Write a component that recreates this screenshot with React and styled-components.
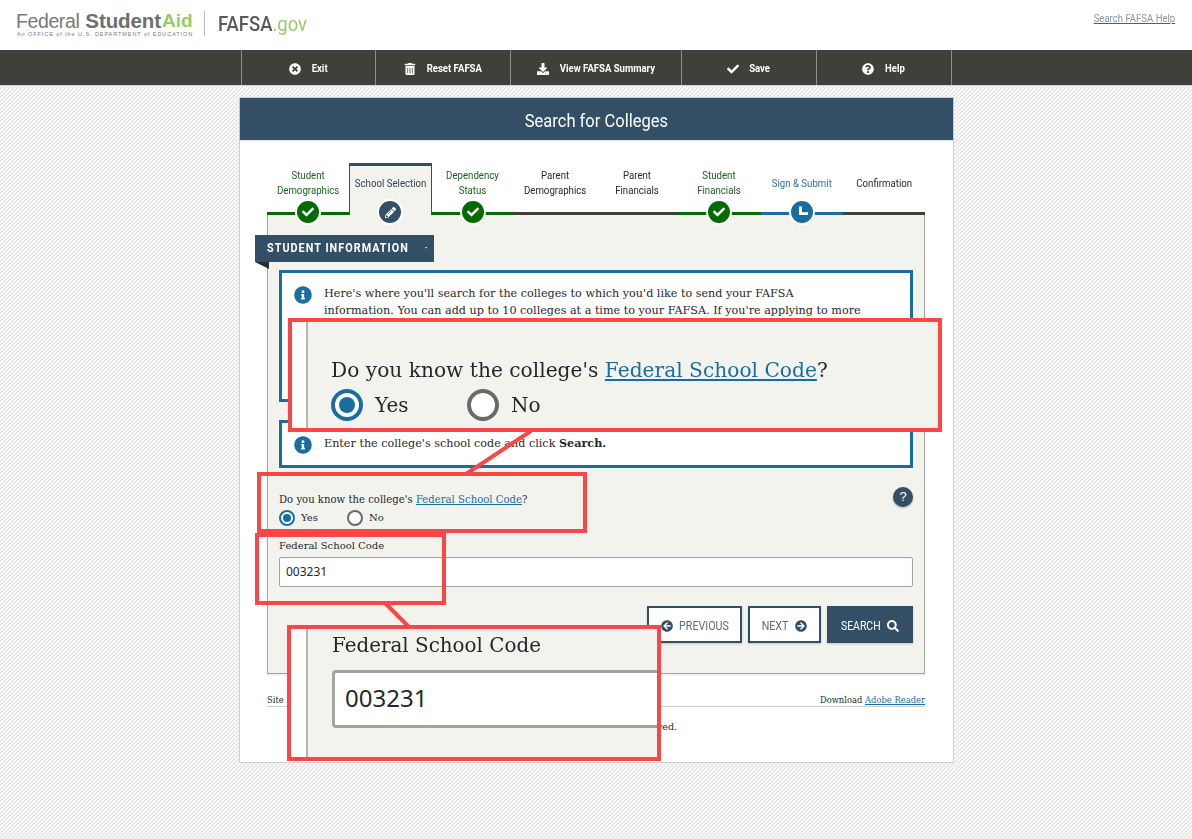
import React from "react";
import styled, { createGlobalStyle } from "styled-components";
import {
  FaTimesCircle, FaTrashAlt, FaDownload, FaCheck, FaQuestionCircle,
  FaPencilAlt, FaInfoCircle, FaArrowCircleLeft, FaArrowCircleRight, FaSearch,
} from "react-icons/fa";

const NARROW = `"Roboto", sans-serif`;
const SERIF = `"DejaVu Serif", "Liberation Serif", serif`;
const NAVY = "#334f66";
const BLUE = "#1a6e9f";
const GREEN = "#046b04";
const PANEL = "#f3f3ee";
const RED = "#fb4646";

const Global = createGlobalStyle`
  html, body { margin: 0; padding: 0; }
  body {
    width: 1192px; height: 839px; overflow: hidden;
    background-color: #fbfbfb;
    background-image: linear-gradient(135deg, #e6e6e6 25%, #fbfbfb 25%, #fbfbfb 50%, #e6e6e6 50%, #e6e6e6 75%, #fbfbfb 75%);
    background-size: 4px 4px;
  }
`;

const Page = styled.div`position: relative; width: 1192px; height: 839px;`;

/* Condensed text: no condensed family is installed, so the glyphs are squeezed and the box trimmed to match. */
const Narrow = styled.span`
  display: inline-block; white-space: nowrap; transform: scaleX(${p => p.$sx || 0.84});
  margin: 0 ${p => -(p.$trim || 0)}px;
`;

const Header = styled.header`
  height: 50px; background: #fff; display: flex; align-items: flex-start;
  justify-content: space-between; padding: 0 17px 0 16px; box-sizing: border-box;
`;
const Logo = styled.div`display: flex; align-items: flex-start; padding-top: 11px;`;
const LogoMark = styled.div`width: 176px; margin-right: 12px;`;
const LogoName = styled.div`
  font: 19.5px/20px "Liberation Sans", sans-serif; color: #77787b; white-space: nowrap;
  display: flex; gap: 6px;
`;
const LogoLight = styled.span`letter-spacing: -0.4px;`;
const Strong = styled.b`color: #6d6e71; font-size: 20.5px; letter-spacing: -0.1px;`;
const GreenStrong = styled.b`color: #98cb66; margin-left: -5px; font-size: 19px;`;
const Tagline = styled.div`
  font: 5.5px/7px "Liberation Sans", sans-serif; color: #77787b; letter-spacing: 0.93px; white-space: nowrap; margin: 0 0 0 1px;
`;
const LogoDivider = styled.div`width: 1px; height: 25px; background: #b9b9b9; margin-right: 13px;`;
const Fafsa = styled.div`
  font: 500 21px/27px "Roboto", "Liberation Sans", sans-serif; color: #58595b;
  transform: scaleX(0.88); transform-origin: left center; white-space: nowrap;
`;
const Gov = styled.span`color: #98cb66; font-weight: 400;`;
const HelpLink = styled.a`
  font: 11.5px/14px ${NARROW}; color: #8795a3; margin-top: 11px; text-decoration: underline; text-decoration-color: ${BLUE};
  transform: scaleX(0.83); transform-origin: right center; white-space: nowrap;
`;

const Toolbar = styled.nav`
  height: 35px; background: #403f3a; border-bottom: 1px solid #d5d5d5;
  display: flex; padding-left: 241px;
`;
const ToolItem = styled.a`
  width: ${p => p.$w}px; box-sizing: border-box; border-left: 1px solid #8f8e89; padding-top: 2px;
  display: flex; align-items: center; justify-content: center; gap: 10px; color: #fff;
  font: 700 11.5px/33px ${NARROW};
  &:last-child { border-right: 1px solid #8f8e89; }
  svg { font-size: 12px; }
`;

const Card = styled.main`
  width: 713px; height: 664px; margin: 11px 0 0 239px; background: #fff; border: 1px solid #cfcfcf;
  display: flex; flex-direction: column;
`;
const Title = styled.h1`
  margin: 0; height: 42px; background: ${NAVY}; color: #fff; text-align: center;
  font: 400 19px/45px ${NARROW}; box-shadow: 0 1px 2px rgba(0,0,0,.15);
`;
const Stepper = styled.ol`
  list-style: none; margin: 0 28px 0 27px; padding: 0; display: grid; grid-template-columns: repeat(8, minmax(0, 1fr)); height: 75px;
`;
const Step = styled.li`
  position: relative; padding-top: 23px; box-sizing: border-box; text-align: center;
  font: 11.5px/15px ${NARROW};
  color: ${p => ({ done: "#1b5e1b", current: "#2f6f9c", todo: "#24272a" }[p.$state])};
  border-bottom: 3px solid ${p => ({ done: GREEN, current: BLUE, todo: "#403f3a" }[p.$state])};
`;
const ActiveStep = styled.li`
  position: relative; margin-top: 23px; height: 52px; box-sizing: border-box; text-align: center;
  font: 11.5px/15px ${NARROW}; color: #2f4356; background: ${PANEL};
  border-top: 3px solid ${NAVY}; border-left: 1px solid ${NAVY}; border-right: 1px solid ${NAVY};
`;
const StepLabel = styled.div`
  height: ${p => p.$h}px; display: flex; align-items: center; justify-content: center;
`;
const StepNode = styled.span`
  position: absolute; left: 50%; bottom: ${p => p.$bottom}px; transform: translateX(-50%);
  width: 22px; height: 22px; border: 2px solid #fff; border-radius: 50%;
  background: ${p => p.$bg}; color: #fff; display: flex; align-items: center; justify-content: center;
  font-size: ${p => p.$icon || 12}px; z-index: 2;
`;

const Panel = styled.section`
  flex: none; margin: 0 28px 0 27px; height: 459px; background: ${PANEL}; box-sizing: border-box;
  border: 1px solid #a3a3a0; border-top: none; padding: 20px 11px 0; box-shadow: 0 1px 2px rgba(0,0,0,.1);
`;
const Ribbon = styled.div`
  position: relative; width: 179px; height: 27px; margin-left: -24px; background: ${NAVY}; color: #fff;
  font: 700 12px/27px "Roboto", sans-serif; padding: 0 12px; box-sizing: border-box;
  white-space: nowrap; display: flex; justify-content: space-between;
  &::after {
    content: ""; position: absolute; left: 0; top: 27px;
    border-top: 7px solid #1f2f3d; border-left: 14px solid transparent;
  }
`;
const RibbonText = styled.span`letter-spacing: 1.15px; transform: scaleX(0.9); transform-origin: left center;`;
const RibbonDot = styled.span`font-size: 9px; margin-right: 1px;`;
const InfoBox = styled.div`
  display: flex; gap: 12px; background: #fff; border: 3px solid ${BLUE}; box-sizing: border-box;
  min-height: ${p => p.$h}px; margin-top: ${p => p.$mt}px; padding: ${p => p.$pt}px 20px 0 12px;
  font: 11.2px/17px ${SERIF}; color: #25282b;
  svg { color: ${BLUE}; font-size: 18px; flex: none; margin-top: 1px; }
`;
const Question = styled.div`
  position: relative; margin-top: 24px; font: 10.1px/15px ${SERIF}; color: #25282b;
`;
const FieldLink = styled.a`color: ${BLUE}; text-decoration: underline;`;
const HelpBubble = styled.span`
  position: absolute; right: 0; top: -5px; width: 20px; height: 20px; border-radius: 50%;
  background: ${NAVY}; color: #fff; font: 13px/20px "Liberation Sans", sans-serif; text-align: center;
  box-shadow: 0 1px 2px rgba(0,0,0,.3);
`;
const Radios = styled.div`display: flex; margin-top: 3px; height: 16px; align-items: center; font: 10px/16px ${SERIF}; color: #25282b;`;
const RadioOption = styled.label`display: flex; align-items: center; gap: 6px; width: 68px;`;
const Radio = styled.span`
  width: 16px; height: 16px; box-sizing: border-box; border-radius: 50%; background: #fff;
  border: 2px solid ${p => p.$on ? BLUE : "#6a6a6a"}; display: flex; align-items: center; justify-content: center;
  &::after { content: ""; width: 8px; height: 8px; border-radius: 50%; background: ${p => p.$on ? BLUE : "transparent"}; }
`;
const FieldLabel = styled.div`margin-top: 13px; font: 10px/14px ${SERIF}; color: #25282b;`;
const Input = styled.input`
  display: block; width: 100%; height: 30px; margin-top: 4px; box-sizing: border-box; background: #fff;
  border: 1px solid #a3a3a0; border-radius: 2px; padding: 0 6px 2px; font: 12px "Noto Sans", sans-serif; color: #25282b;
  box-shadow: inset 0 1px 2px rgba(0,0,0,.06);
`;
const Actions = styled.div`display: flex; justify-content: flex-end; gap: 6px; margin-top: 19px;`;
const Btn = styled.button`
  height: 37px; width: ${p => p.$w}px; box-sizing: border-box; padding: 2px 0 0;
  display: flex; align-items: center; justify-content: center; gap: 6px;
  border: 2px solid ${NAVY}; background: ${p => p.$solid ? NAVY : "#fff"}; color: ${p => p.$solid ? "#fff" : "#5a6b7a"};
  font: 12px ${NARROW}; box-shadow: 0 1px 2px rgba(0,0,0,.2);
  svg { font-size: 12px; color: ${p => p.$solid ? "#fff" : NAVY}; }
`;
const Footer = styled.footer`margin: 0 28px 0 27px; font: 8.4px/12px ${SERIF}; color: #25282b;`;
const FooterTop = styled.div`
  display: flex; justify-content: space-between; margin-top: 20px; height: 12px; border-bottom: 1px solid #cfcfcf;
`;
const FooterNote = styled.div`margin-top: 14px; padding-right: 248px; text-align: right; white-space: nowrap; font-size: 9.5px;`;

const Outline = styled.div`
  position: absolute; box-sizing: border-box; border: 4px solid ${RED};
  left: ${p => p.$x}px; top: ${p => p.$y}px; width: ${p => p.$w}px; height: ${p => p.$h}px;
  z-index: 5;
`;
const Magnified = styled(Outline)`
  background: ${PANEL}; z-index: 6;
  &::before { content: ""; position: absolute; left: 0; top: 0; bottom: 0; width: ${p => p.$strip}px; background: #fff; border-right: 2px solid #b4b4b0; }
`;
const BigQuestion = styled.div`
  position: absolute; left: 39px; top: 33px; white-space: nowrap; font: 20.2px/30px ${SERIF}; color: #25282b; filter: blur(0.35px);
`;
const BigRadios = styled.div`
  position: absolute; left: 39px; top: 67px; display: flex; align-items: center; font: 20px/32px ${SERIF}; color: #25282b; filter: blur(0.35px);
`;
const BigOption = styled.label`display: flex; align-items: center; gap: 12px; width: 136px;`;
const BigRadio = styled.span`
  width: 32px; height: 32px; box-sizing: border-box; border-radius: 50%; background: #fff;
  border: 4px solid ${p => p.$on ? BLUE : "#6a6a6a"}; display: flex; align-items: center; justify-content: center;
  &::after { content: ""; width: 16px; height: 16px; border-radius: 50%; background: ${p => p.$on ? BLUE : "transparent"}; }
`;
const BigLabel = styled.div`
  position: absolute; left: 41px; top: 3px; font: 19.9px/28px ${SERIF}; color: #25282b; white-space: nowrap; filter: blur(0.35px);
`;
const BigInput = styled.div`
  position: absolute; left: 41px; right: 0; top: 41px; height: 58px; box-sizing: border-box; background: #fff;
  border: 3px solid #a3a3a0; border-right: none; border-radius: 4px 0 0 4px; padding-left: 10px;
  font: 24px/50px "Noto Sans", sans-serif; color: #25282b;
`;
const Connector = styled.svg`position: absolute; left: 0; top: 0; z-index: 4; pointer-events: none;`;

const ClockHands = () => (
  <svg width="14" height="14" viewBox="0 0 14 14" aria-hidden="true">
    <path d="M4 1.5H7V7.2H13V10H4Z" fill="#fff" />
  </svg>
);

const STEPS = [
  { label: ["Student", "Demographics"], state: "done" },
  { label: ["School Selection"], state: "active" },
  { label: ["Dependency", "Status"], state: "done" },
  { label: ["Parent", "Demographics"], state: "todo" },
  { label: ["Parent", "Financials"], state: "todo" },
  { label: ["Student", "Financials"], state: "done" },
  { label: ["Sign & Submit"], state: "current" },
  { label: ["Confirmation"], state: "todo" },
];
const TOOLS = [
  [134, FaTimesCircle, "Exit", 1],
  [135, FaTrashAlt, "Reset FAFSA", 5],
  [171, FaDownload, "View FAFSA Summary", 9],
  [135, FaCheck, "Save", 2],
  [136, FaQuestionCircle, "Help", 1],
];

const StepText = ({ lines }) => (
  <Narrow>{lines.map(l => <div key={l}>{l}</div>)}</Narrow>
);

export default function App() {
  return (
    <Page>
      <Global />
      <Header>
        <Logo>
          <LogoMark>
            <LogoName><LogoLight>Federal</LogoLight><Strong>Student</Strong><GreenStrong>Aid</GreenStrong></LogoName>
            <Tagline>An OFFICE of the U.S. DEPARTMENT of EDUCATION</Tagline>
          </LogoMark>
          <LogoDivider />
          <Fafsa>FAFSA<Gov>.gov</Gov></Fafsa>
        </Logo>
        <HelpLink>Search FAFSA Help</HelpLink>
      </Header>
      <Toolbar>
        {TOOLS.map(([w, Icon, text, trim]) => (
          <ToolItem key={text} $w={w}><Icon /><Narrow $sx={0.83} $trim={trim}>{text}</Narrow></ToolItem>
        ))}
      </Toolbar>
      <Card>
        <Title><Narrow $sx={0.87}>Search for Colleges</Narrow></Title>
        <Stepper>
          {STEPS.map(s => s.state === "active" ? (
            <ActiveStep key={s.label[0]}>
              <StepLabel $h={34}><StepText lines={s.label} /></StepLabel>
              <StepNode $bg={NAVY} $bottom={-10} $icon={11}><FaPencilAlt /></StepNode>
            </ActiveStep>
          ) : (
            <Step key={s.label.join()} $state={s.state}>
              <StepLabel $h={40}><StepText lines={s.label} /></StepLabel>
              {s.state === "done" && <StepNode $bg={GREEN} $bottom={-13}><FaCheck /></StepNode>}
              {s.state === "current" && <StepNode $bg={BLUE} $bottom={-13}><ClockHands /></StepNode>}
            </Step>
          ))}
        </Stepper>
        <Panel>
          <Ribbon><RibbonText>STUDENT INFORMATION</RibbonText><RibbonDot>·</RibbonDot></Ribbon>
          <InfoBox $h={132} $mt={8} $pt={12}>
            <FaInfoCircle />
            <div>
              Here's where you'll search for the colleges to which you'd like to send your FAFSA<br />
              information. You can add up to 10 colleges at a time to your FAFSA. If you're applying to more<br />
              than 10 colleges, you can add more later.
            </div>
          </InfoBox>
          <InfoBox $h={48} $mt={18} $pt={12}>
            <FaInfoCircle />
            <div>Enter the college's school code and click <b>Search.</b></div>
          </InfoBox>
          <Question>
            Do you know the college's <FieldLink>Federal School Code</FieldLink>?
            <HelpBubble>?</HelpBubble>
          </Question>
          <Radios>
            <RadioOption><Radio $on />Yes</RadioOption>
            <RadioOption><Radio />No</RadioOption>
          </Radios>
          <FieldLabel>Federal School Code</FieldLabel>
          <Input defaultValue="003231" />
          <Actions>
            <Btn $w={95}><FaArrowCircleLeft /><Narrow $sx={0.89} $trim={3}>PREVIOUS</Narrow></Btn>
            <Btn $w={73}><Narrow $sx={0.89} $trim={2}>NEXT</Narrow><FaArrowCircleRight /></Btn>
            <Btn $w={86} $solid><Narrow $sx={0.87} $trim={3}>SEARCH</Narrow><FaSearch /></Btn>
          </Actions>
        </Panel>
        <Footer>
          <FooterTop>
            <span>Site Links</span>
            <span>Download <FieldLink>Adobe Reader</FieldLink></span>
          </FooterTop>
          <FooterNote>All rights reserved.</FooterNote>
        </Footer>
      </Card>

      <Connector width="1192" height="839">
        <line x1="531" y1="431" x2="466" y2="474" stroke={RED} strokeWidth="4" />
        <line x1="385" y1="603" x2="409" y2="627" stroke={RED} strokeWidth="4" />
      </Connector>
      <Outline $x={257} $y={472} $w={330} $h={61} />
      <Outline $x={255} $y={533} $w={191} $h={72} />
      <Magnified $x={288} $y={318} $w={654} $h={114} $strip={14}>
        <BigQuestion>Do you know the college's <FieldLink>Federal School Code</FieldLink>?</BigQuestion>
        <BigRadios>
          <BigOption><BigRadio $on />Yes</BigOption>
          <BigOption><BigRadio />No</BigOption>
        </BigRadios>
      </Magnified>
      <Magnified $x={287} $y={625} $w={374} $h={136} $strip={15}>
        <BigLabel>Federal School Code</BigLabel>
        <BigInput>003231</BigInput>
      </Magnified>
    </Page>
  );
}
